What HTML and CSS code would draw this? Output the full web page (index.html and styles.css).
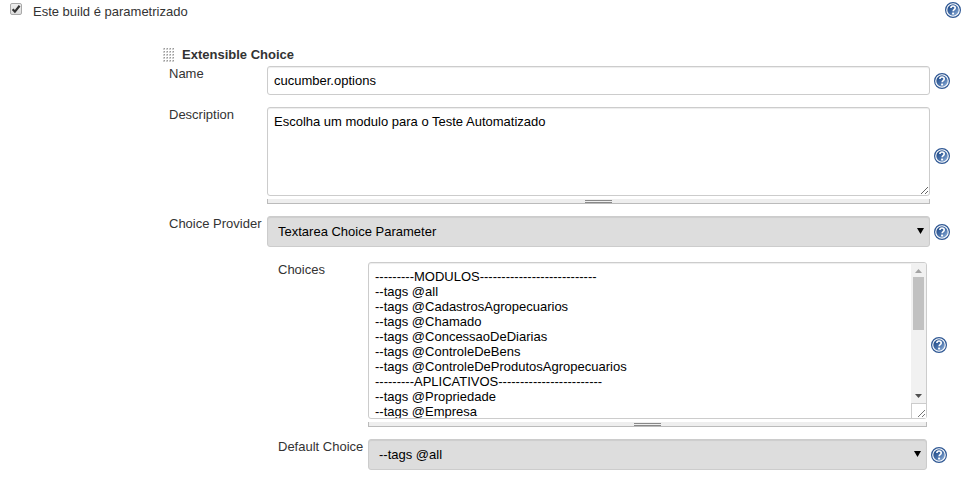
FILE: index.html
```html
<!DOCTYPE html>
<html lang="pt-BR">
<head>
<meta charset="utf-8">
<title>Configuração do build</title>
<link rel="stylesheet" href="styles.css">
</head>
<body>
<svg class="defs" aria-hidden="true">
  <defs>
    <linearGradient id="ball" x1="0" y1="0" x2="1" y2="1">
      <stop offset="0.1" stop-color="#204a87"/>
      <stop offset="0.55" stop-color="#4a73ac"/>
      <stop offset="1" stop-color="#9dbbe0"/>
    </linearGradient>
    <symbol id="help" viewBox="0 0 16 16">
      <circle cx="8" cy="8" r="7.4" fill="#fff" stroke="#2f5894" stroke-width="1.2"/>
      <circle cx="8" cy="8" r="5.7" fill="url(#ball)"/>
      <path d="M5.9 6.1C5.9 4.6 6.8 4 8 4s2.2.7 2.2 1.9c0 1.6-2.1 1.7-2.1 3.4" fill="none" stroke="#fff" stroke-width="1.6"/>
      <rect x="7.1" y="10.6" width="2" height="1.8" fill="#fff"/>
    </symbol>
  </defs>
</svg>
<form class="config">
  <div class="toggle">
    <input class="check" type="checkbox" id="param" checked>
    <label for="param">Este build é parametrizado</label>
    <button class="help" type="button" aria-label="Ajuda"><svg><use href="#help"/></svg></button>
  </div>
  <section class="parameter">
    <h2 class="title"><span class="grip"></span>Extensible Choice</h2>
    <div class="row">
      <label for="name">Name</label>
      <input class="field" id="name" type="text" value="cucumber.options">
      <button class="help" type="button" aria-label="Ajuda"><svg><use href="#help"/></svg></button>
    </div>
    <div class="row">
      <label for="desc">Description</label>
      <div class="area">
        <textarea class="field desc" id="desc">Escolha um modulo para o Teste Automatizado</textarea>
        <div class="sizer"></div>
      </div>
      <button class="help" type="button" aria-label="Ajuda"><svg><use href="#help"/></svg></button>
    </div>
    <div class="row">
      <label for="provider">Choice Provider</label>
      <div class="pick"><select id="provider"><option>Textarea Choice Parameter</option></select></div>
      <button class="help" type="button" aria-label="Ajuda"><svg><use href="#help"/></svg></button>
    </div>
    <div class="nested">
      <div class="row">
        <label for="choices">Choices</label>
        <div class="area">
          <textarea class="field choices" id="choices">---------MODULOS---------------------------
--tags @all
--tags @CadastrosAgropecuarios
--tags @Chamado
--tags @ConcessaoDeDiarias
--tags @ControleDeBens
--tags @ControleDeProdutosAgropecuarios
---------APLICATIVOS------------------------
--tags @Propriedade
--tags @Empresa</textarea>
          <div class="scrollbar" aria-hidden="true">
            <span class="arrow up"></span>
            <span class="thumb"></span>
            <span class="arrow down"></span>
          </div>
          <div class="sizer"></div>
        </div>
        <button class="help" type="button" aria-label="Ajuda"><svg><use href="#help"/></svg></button>
      </div>
      <div class="row">
        <label for="default">Default Choice</label>
        <div class="pick"><select id="default"><option>--tags @all</option></select></div>
        <button class="help" type="button" aria-label="Ajuda"><svg><use href="#help"/></svg></button>
      </div>
    </div>
  </section>
</form>
</body>
</html>
```
FILE: styles.css
```css
* { box-sizing: border-box; }

body {
  margin: 0;
  background: #fff;
  color: #333;
  font: 13px/15px "Liberation Sans", Arial, sans-serif;
}

.defs { position: absolute; width: 0; height: 0; }

.toggle {
  display: flex;
  align-items: flex-start;
  padding: 2px 8px 0 10px;
}
.toggle label { flex: 1; padding: 2px 0 0 11px; }

.check {
  appearance: none;
  width: 12px;
  height: 12px;
  margin: 1px 0 0;
  border: 1px solid #a9a9a9;
  border-radius: 2px;
  background:
    url("data:image/svg+xml,%3Csvg xmlns='http://www.w3.org/2000/svg' viewBox='0 0 10 10'%3E%3Cpath d='M1.6 5.2L3.9 7.6 8.6 1.8' fill='none' stroke='%23333' stroke-width='2.2'/%3E%3C/svg%3E") center / 10px 10px no-repeat,
    linear-gradient(#eee, #ddd);
}

.help {
  width: 16px;
  height: 16px;
  padding: 0;
  border: 0;
  background: none;
}
.help svg { display: block; width: 16px; height: 16px; }

.parameter { padding: 28px 19px 0 163px; }

.title {
  display: flex;
  align-items: center;
  gap: 7px;
  margin: 0 0 4px;
  font-size: 13px;
  line-height: 15px;
}
.grip {
  width: 12px;
  height: 14px;
  background: url("data:image/svg+xml,%3Csvg xmlns='http://www.w3.org/2000/svg' viewBox='0 0 3 3'%3E%3Cpath d='M0 0h2v2H0z' fill='%23d0d0d0'/%3E%3Cpath d='M1 0h1v1H1z' fill='%23999'/%3E%3C/svg%3E") 0 0 / 3px 3px;
}

.row {
  display: grid;
  grid-template-columns: 98px minmax(0, 1fr) 20px;
  align-items: center;
  margin: 0 0 12px 6px;
}
.row > label { align-self: start; white-space: nowrap; }
.row > .help { justify-self: end; }

.nested { padding: 3px 3px 0 109px; }
.nested .row { grid-template-columns: 90px minmax(0, 1fr) 20px; }

.field {
  display: block;
  width: 100%;
  margin: 0;
  padding: 6px;
  border: 1px solid #ccc;
  border-radius: 3px;
  background: #fff;
  box-shadow: inset 0 1px 1px rgba(0, 0, 0, 0.075);
  color: #000;
  font: inherit;
  outline: 0;
}
input.field { height: 29px; }
.desc { height: 89px; }
.choices { height: 157px; overflow-y: scroll; }
.choices::-webkit-resizer {
  border: solid #ccc;
  border-width: 1px 0 0 1px;
  background: #fff url("data:image/svg+xml,%3Csvg xmlns='http://www.w3.org/2000/svg' viewBox='0 0 14 14'%3E%3Cpath d='M6 13l7-7M10 13l3-3' stroke='%23777'/%3E%3C/svg%3E") center / 14px 14px no-repeat;
}

.area { position: relative; }

.scrollbar {
  position: absolute;
  top: 1px;
  right: 1px;
  display: flex;
  flex-direction: column;
  align-items: center;
  width: 15px;
  height: 140px;
  border-radius: 0 2px 0 0;
  background: #f1f1f1;
}
.thumb {
  width: 11px;
  height: 53px;
  margin-bottom: auto;
  background: #c1c1c1;
}
.arrow { width: 7px; height: 4px; }
.up {
  margin: 6px 0 4px;
  background: #a3a3a3;
  clip-path: polygon(50% 0, 100% 100%, 0 100%);
}
.down {
  margin-bottom: 5px;
  background: #505050;
  clip-path: polygon(0 0, 100% 0, 50% 100%);
}

.sizer {
  height: 5px;
  margin-top: 3px;
  border: solid #bbb;
  border-width: 0 1px 1px;
  background:
    linear-gradient(#888 1px, transparent 1px 2px, #888 2px 3px, transparent 3px) center 1px / 27px 4px no-repeat,
    #eee;
}

.pick { position: relative; }
.pick::after {
  content: "";
  position: absolute;
  top: 12px;
  right: 6px;
  width: 7px;
  height: 6px;
  background: #000;
  clip-path: polygon(0 0, 100% 0, 50% 100%);
  pointer-events: none;
}
.pick select {
  display: block;
  appearance: none;
  width: 100%;
  height: 31px;
  margin: 0;
  padding: 0 24px 0 10px;
  border: 1px solid #ccc;
  border-radius: 3px;
  background: #ddd;
  box-shadow: inset 0 1px 1px rgba(0, 0, 0, 0.075);
  color: #000;
  font: inherit;
}
```
